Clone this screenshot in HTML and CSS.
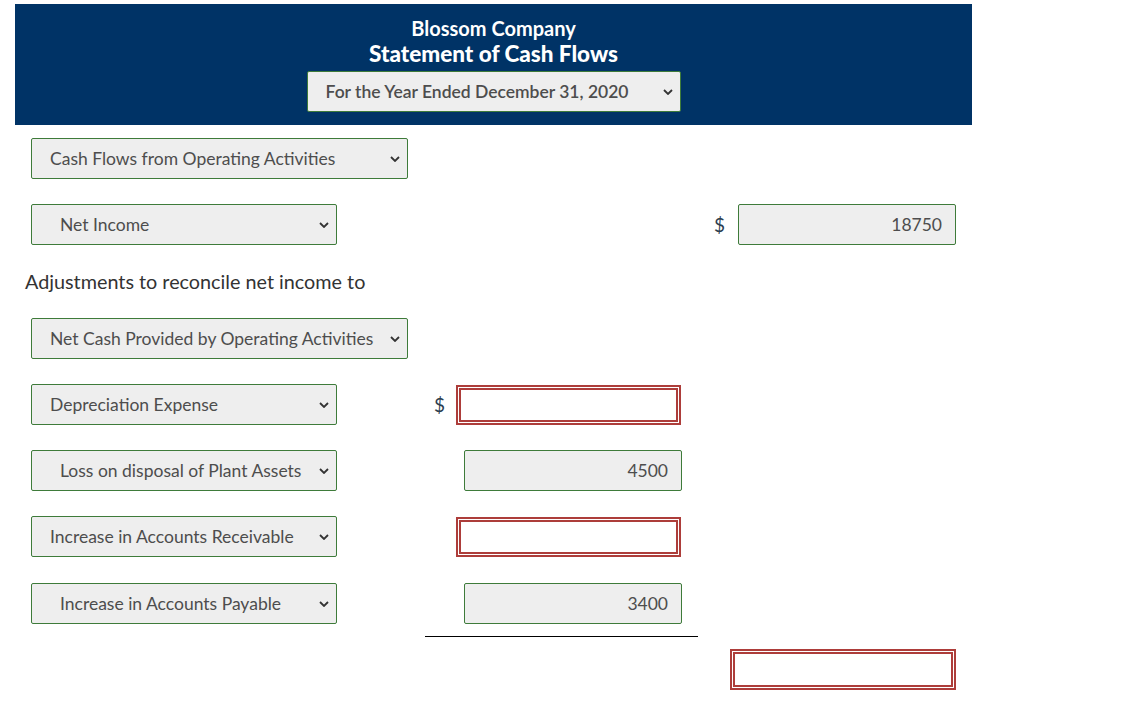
FILE: index.html
```html
<!DOCTYPE html>
<html lang="en">
<head>
<meta charset="utf-8">
<title>Blossom Company - Statement of Cash Flows</title>
<link rel="stylesheet" href="styles.css">
</head>
<body>
<div class="sheet">
  <header class="head">
    <div class="company">Blossom Company</div>
    <div class="title">Statement of Cash Flows</div>
    <div class="select select-head"><span class="label">For the Year Ended December 31, 2020</span><svg class="chev" viewBox="0 0 10 6" width="10" height="6"><path d="M1 1 L5 5 L9 1" fill="none" stroke="#333" stroke-width="1.8"/></svg></div>
  </header>

  <div class="row r-first">
    <div class="c1"><div class="select wide"><span class="label">Cash Flows from Operating Activities</span><svg class="chev" viewBox="0 0 10 6" width="10" height="6"><path d="M1 1 L5 5 L9 1" fill="none" stroke="#333" stroke-width="1.8"/></svg></div></div>
    <div class="c2"></div>
    <div class="c3"></div>
  </div>

  <div class="row">
    <div class="c1"><div class="select narrow indent"><span class="label">Net Income</span><svg class="chev" viewBox="0 0 10 6" width="10" height="6"><path d="M1 1 L5 5 L9 1" fill="none" stroke="#333" stroke-width="1.8"/></svg></div></div>
    <div class="c2"></div>
    <div class="c3"><span class="dollar">$</span><div class="field filled">18750</div></div>
  </div>

  <div class="text-row">Adjustments to reconcile net income to</div>

  <div class="row r-after-text">
    <div class="c1"><div class="select wide"><span class="label">Net Cash Provided by Operating Activities</span><svg class="chev" viewBox="0 0 10 6" width="10" height="6"><path d="M1 1 L5 5 L9 1" fill="none" stroke="#333" stroke-width="1.8"/></svg></div></div>
    <div class="c2"></div>
    <div class="c3"></div>
  </div>

  <div class="row">
    <div class="c1"><div class="select narrow"><span class="label">Depreciation Expense</span><svg class="chev" viewBox="0 0 10 6" width="10" height="6"><path d="M1 1 L5 5 L9 1" fill="none" stroke="#333" stroke-width="1.8"/></svg></div></div>
    <div class="c2"><span class="dollar">$</span><div class="field error"></div></div>
    <div class="c3"></div>
  </div>

  <div class="row">
    <div class="c1"><div class="select narrow indent"><span class="label">Loss on disposal of Plant Assets</span><svg class="chev" viewBox="0 0 10 6" width="10" height="6"><path d="M1 1 L5 5 L9 1" fill="none" stroke="#333" stroke-width="1.8"/></svg></div></div>
    <div class="c2"><div class="field filled">4500</div></div>
    <div class="c3"></div>
  </div>

  <div class="row">
    <div class="c1"><div class="select narrow"><span class="label">Increase in Accounts Receivable</span><svg class="chev" viewBox="0 0 10 6" width="10" height="6"><path d="M1 1 L5 5 L9 1" fill="none" stroke="#333" stroke-width="1.8"/></svg></div></div>
    <div class="c2"><div class="field error"></div></div>
    <div class="c3"></div>
  </div>

  <div class="row r-last">
    <div class="c1"><div class="select narrow indent"><span class="label">Increase in Accounts Payable</span><svg class="chev" viewBox="0 0 10 6" width="10" height="6"><path d="M1 1 L5 5 L9 1" fill="none" stroke="#333" stroke-width="1.8"/></svg></div></div>
    <div class="c2"><div class="field filled">3400</div></div>
    <div class="c3"></div>
  </div>

  <div class="rule-row">
    <div class="c1"></div>
    <div class="rule"></div>
    <div class="c3"></div>
  </div>

  <div class="row r-total">
    <div class="c1"></div>
    <div class="c2"></div>
    <div class="c3 total"><div class="field error wide-error"></div></div>
  </div>
</div>
</body>
</html>
```

FILE: styles.css
```css
* { box-sizing: border-box; }

body {
  margin: 0;
  background: #ffffff;
  font-family: Lato, "Open Sans", "Liberation Sans", sans-serif;
  color: #333333;
}

.sheet {
  width: 957px;
  margin: 4px 0 0 15px;
}

.head {
  background: #003366;
  height: 121px;
  display: flex;
  flex-direction: column;
  align-items: center;
  padding-top: 12px;
  color: #ffffff;
}

.company {
  font-size: 20px;
  font-weight: 700;
  line-height: 24px;
}

.title {
  font-size: 22.5px;
  font-weight: 900;
  line-height: 28px;
}

.select {
  height: 41px;
  background: #eeeeee;
  border: 1px solid #3e7b3a;
  border-radius: 2px;
  display: flex;
  align-items: center;
  padding-left: 18px;
  padding-right: 7px;
  color: #4d4d4d;
  font-size: 17.5px;
}

.select .label {
  flex: 1;
  white-space: nowrap;
}

.select .chev {
  flex: none;
}

.select-head {
  width: 374px;
  margin-top: 3px;
  font-weight: 600;
  font-size: 17.5px;
}

.indent { padding-left: 28px; }

.wide { width: 377px; }
.narrow { width: 306px; }

.row {
  display: grid;
  grid-template-columns: 410px 275px 272px;
  height: 41px;
  margin-top: 25px;
}

.r-first { margin-top: 13px; }
.r-after-text { margin-top: 25px; }
.r-last { margin-top: 26px; }
.r-total { margin-top: 12px; }

.c1 {
  padding-left: 16px;
  display: flex;
  align-items: center;
}

.c2 {
  display: flex;
  align-items: center;
  justify-content: flex-end;
  padding-right: 18px;
}

.c2 .dollar {
  margin-right: auto;
  margin-left: 9px;
}

.c3 {
  display: flex;
  align-items: center;
  justify-content: flex-end;
  padding-right: 16px;
}

.c3 .dollar {
  margin-right: auto;
  margin-left: 14px;
}

.dollar {
  font-size: 19px;
  color: #2b3d4f;
}

.text-row {
  margin-top: 25px;
  height: 23px;
  line-height: 23px;
  padding-left: 10px;
  font-size: 19.8px;
  color: #333333;
}

.field {
  height: 41px;
  width: 218px;
  border-radius: 2px;
  font-size: 17.5px;
  color: #4d4d4d;
  display: flex;
  align-items: center;
  justify-content: flex-end;
  padding-right: 13px;
}

.filled {
  background: #eeeeee;
  border: 1px solid #3e7b3a;
}

.error {
  width: 225px;
  height: 40px;
  background: #ffffff;
  border: 5px double #ad3d3a;
  border-radius: 0;
}

.c2 .error { margin-right: 1px; }

.wide-error {
  width: 226px;
  height: 41px;
}

.rule-row {
  display: grid;
  grid-template-columns: 410px 273px 274px;
  margin-top: 12px;
  height: 1px;
}

.rule {
  height: 1px;
  background: #000000;
}
```
